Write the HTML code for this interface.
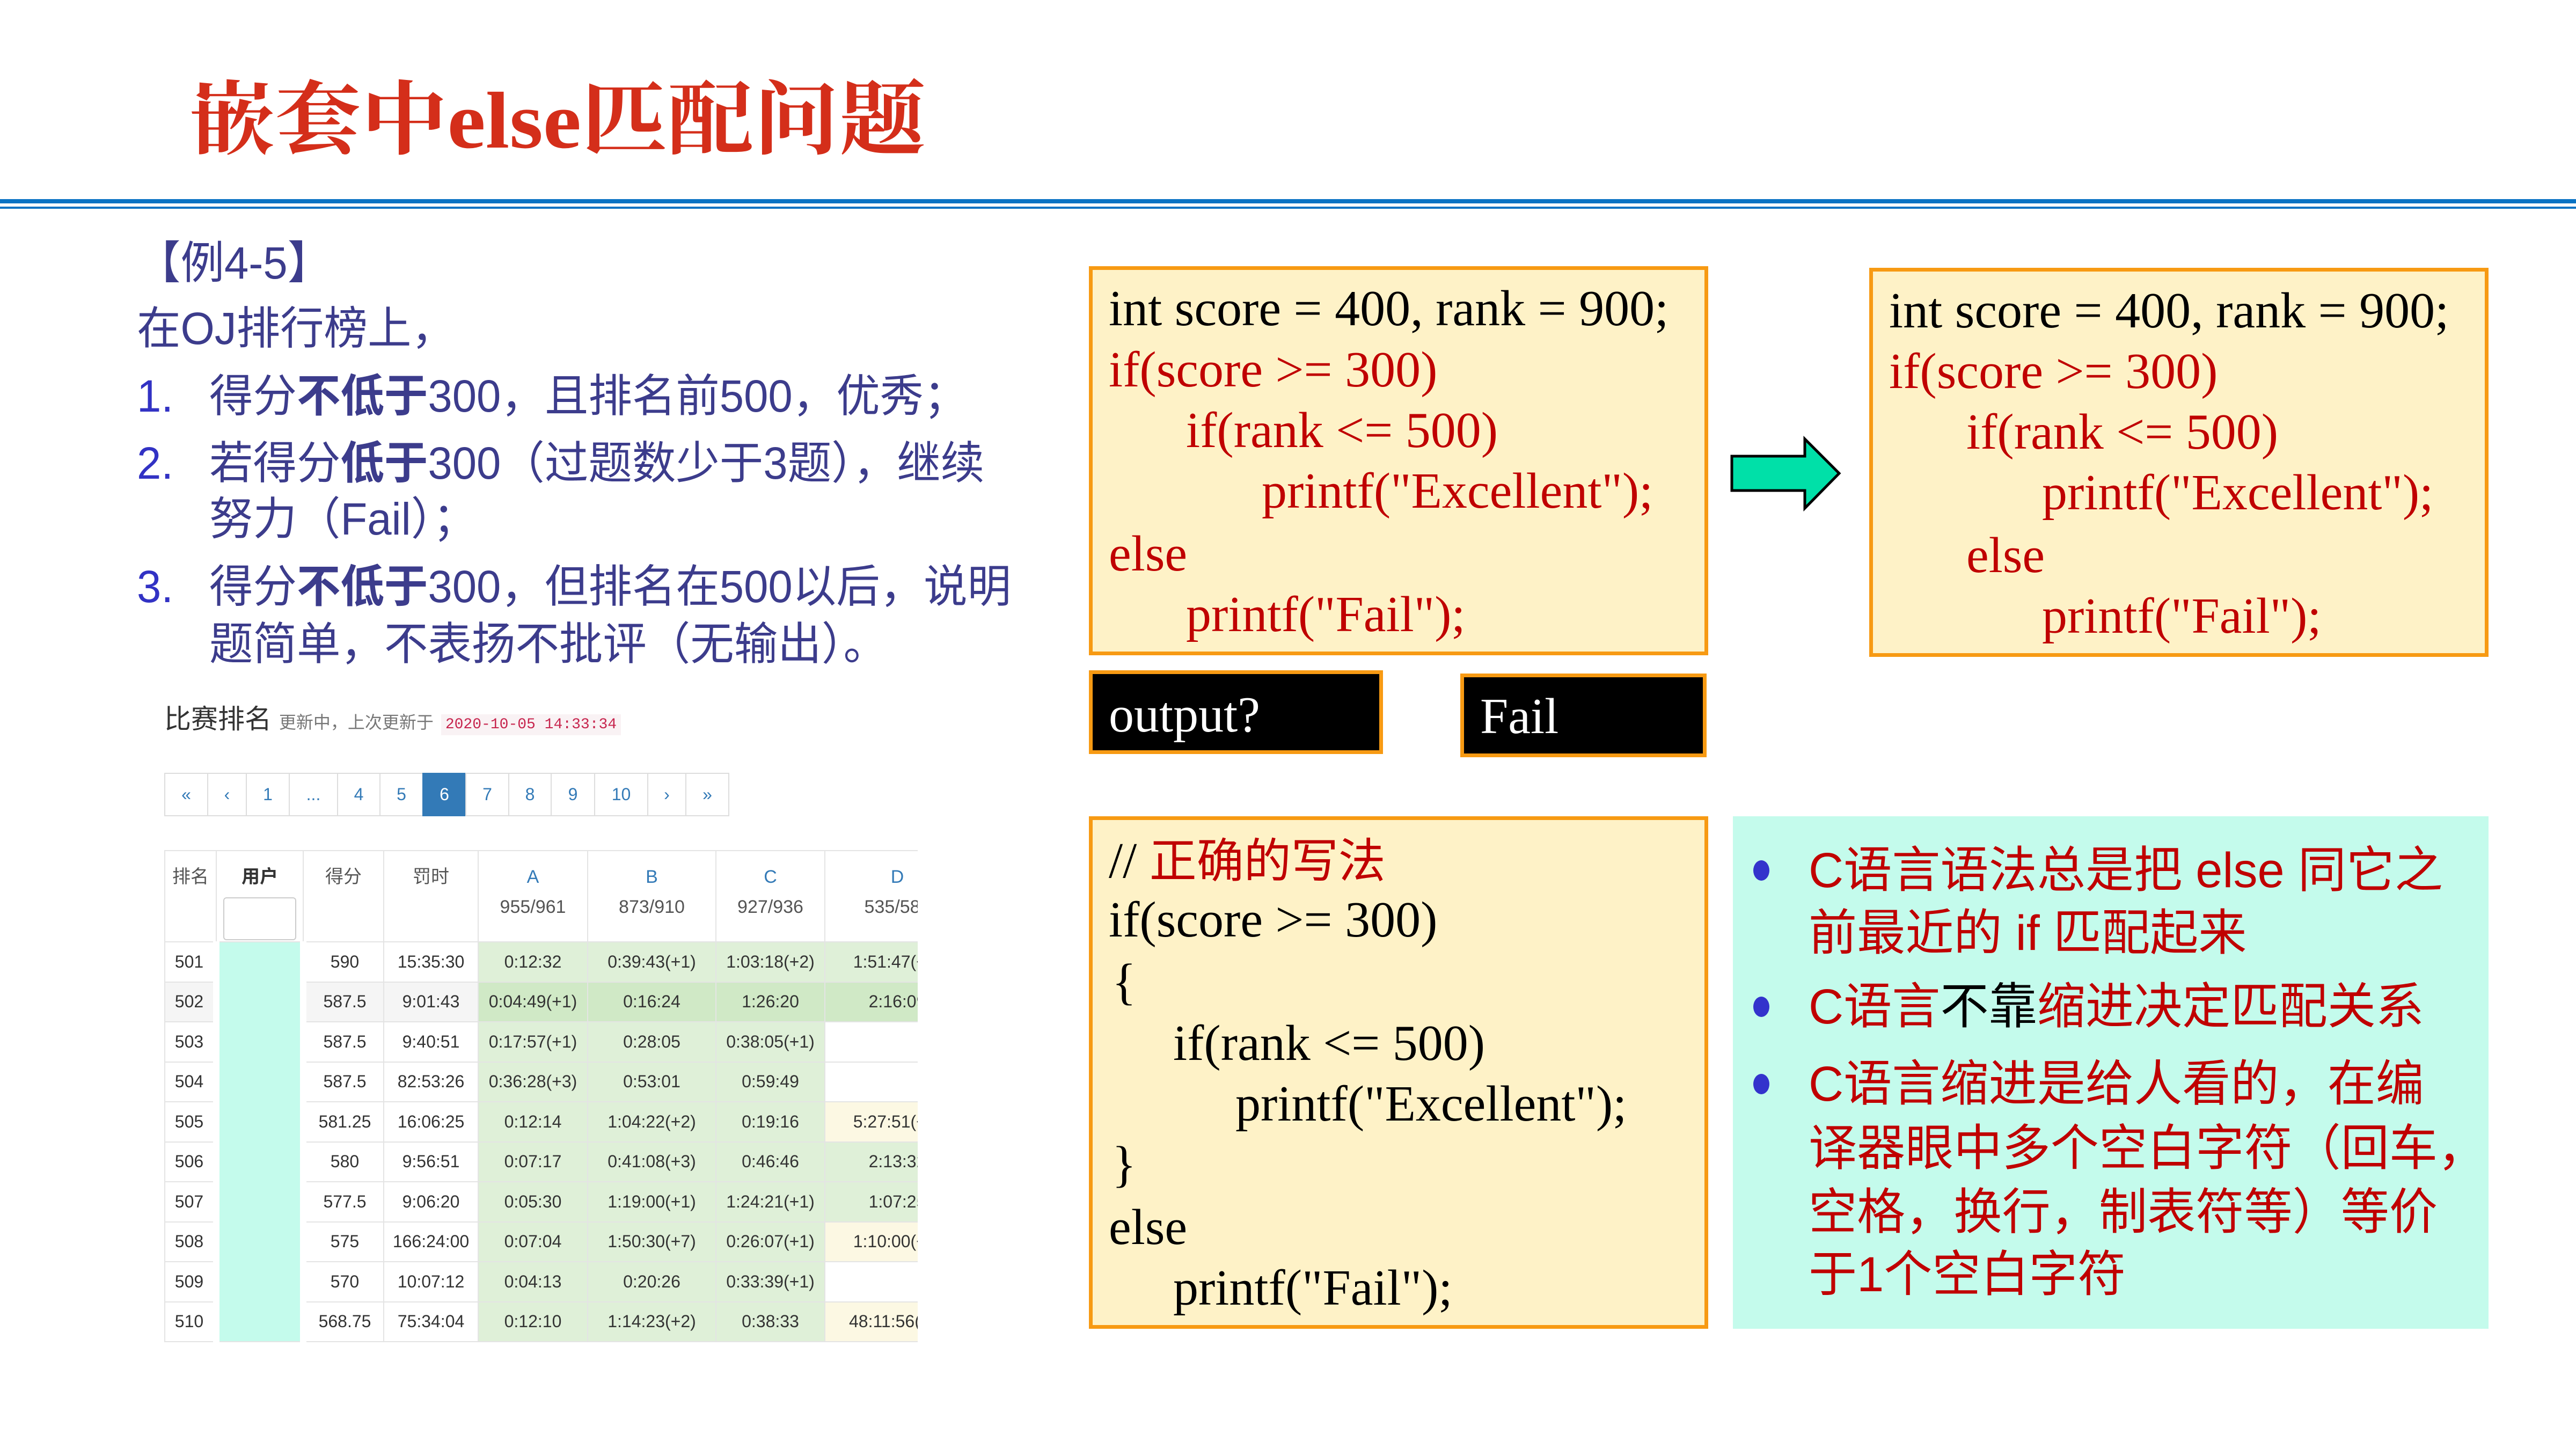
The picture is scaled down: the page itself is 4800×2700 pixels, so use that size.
<!DOCTYPE html>
<html><head><meta charset="utf-8"><style>
*{margin:0;padding:0;box-sizing:border-box}
body{width:4800px;height:2700px;background:#fff;position:relative;overflow:hidden;font-family:"Liberation Sans","Noto Sans CJK SC",sans-serif}
.a{position:absolute;white-space:nowrap}
.l{font-size:84px;color:#3c3c8c;line-height:100px;transform:scaleX(.97);transform-origin:left}
.n{color:#3232c4}
.c{font-family:"Liberation Serif","Noto Serif CJK SC",serif;font-size:94px;line-height:110px}
.r{color:#c00000}.k{color:#000}
.box{position:absolute;background:#fef2c7;border:7px solid #f79a13}
.bl{position:absolute;background:#000;border:7px solid #f79a13}
.m{font-size:92px;line-height:110px;color:#c00000;transform:scaleX(.98);transform-origin:left}
.dot{position:absolute;width:30px;height:38px;border-radius:50%;background:#3333cc}
table{border-collapse:collapse;table-layout:fixed;font-size:32px;color:#333}
td{border:2px solid #e4e4e4;text-align:center;height:74.5px;padding:0;overflow:hidden;white-space:nowrap}
.g{background:#dff0d8}.gd{background:#d0e9c6}.y{background:#fcf8e3}.gr{background:#f5f5f5}
th{border:2px solid #e4e4e4;font-weight:normal;vertical-align:top;padding-top:20px;color:#555;font-size:34px;line-height:56px}
.pg{position:absolute;top:1440px;height:81px;border:2px solid #ddd;color:#337ab7;font-size:32px;display:flex;align-items:center;justify-content:center}
</style></head><body>

<div class="a" style="left:352px;top:140px;font-family:'Liberation Serif','Noto Serif CJK SC',serif;font-weight:bold;font-size:150px;color:#d42e1a;line-height:170px;transform:scaleX(1.07);transform-origin:left">嵌套中else匹配问题</div>
<div class="a" style="left:0;top:371px;width:4800px;height:8px;background:#0a73c4"></div>
<div class="a" style="left:0;top:385px;width:4800px;height:4px;background:#0a73c4"></div>

<div class="a l" style="left:255px;top:440px">【例4-5】</div>
<div class="a l" style="left:255px;top:562px">在OJ排行榜上，</div>
<div class="a l" style="left:255px;top:688px"><span class="n">1.</span></div>
<div class="a l" style="left:390px;top:688px">得分<b>不低于</b>300，且排名前500，优秀；</div>
<div class="a l" style="left:255px;top:813px"><span class="n">2.</span></div>
<div class="a l" style="left:390px;top:813px">若得分<b>低于</b>300（过题数少于3题），继续</div>
<div class="a l" style="left:390px;top:917px">努力（Fail）；</div>
<div class="a l" style="left:255px;top:1043px"><span class="n">3.</span></div>
<div class="a l" style="left:390px;top:1043px">得分<b>不低于</b>300，但排名在500以后，说明</div>
<div class="a l" style="left:390px;top:1150px">题简单，不表扬不批评（无输出）。</div>

<!-- ranking -->
<div class="a" style="left:306px;top:1305px;font-size:50px;color:#333;line-height:70px">比赛排名 <span style="font-size:32px;color:#777">更新中，上次更新于</span> <span style="font-family:'Liberation Mono',monospace;font-size:28px;color:#c7254e;background:#f9f2f4;padding:4px 8px">2020-10-05 14:33:34</span></div>
<div class="pg" style="left:306px;width:82px">«</div>
<div class="pg" style="left:386px;width:74px">‹</div>
<div class="pg" style="left:458px;width:82px">1</div>
<div class="pg" style="left:538px;width:92px">...</div>
<div class="pg" style="left:628px;width:81px">4</div>
<div class="pg" style="left:707px;width:82px">5</div>
<div class="pg" style="left:787px;width:82px;background:#337ab7;color:#fff;border-color:#337ab7">6</div>
<div class="pg" style="left:867px;width:82px">7</div>
<div class="pg" style="left:947px;width:81px">8</div>
<div class="pg" style="left:1026px;width:83px">9</div>
<div class="pg" style="left:1107px;width:101px">10</div>
<div class="pg" style="left:1206px;width:73px">›</div>
<div class="pg" style="left:1277px;width:82px">»</div>

<div class="a" style="left:306px;top:1584px;width:1404px;height:920px;overflow:hidden">
<table style="width:1500px">
<colgroup><col style="width:96px"><col style="width:162px"><col style="width:150px"><col style="width:176px"><col style="width:204px"><col style="width:239px"><col style="width:203px"><col style="width:270px"></colgroup>
<tr style="height:170px"><th>排名</th><th style="color:#333;font-weight:bold">用户<div style="margin:10px auto 0;width:136px;height:80px;border:2px solid #ccc;border-radius:6px"></div></th><th>得分</th><th>罚时</th><th><span style="color:#337ab7">A</span><br>955/961</th><th><span style="color:#337ab7">B</span><br>873/910</th><th><span style="color:#337ab7">C</span><br>927/936</th><th><span style="color:#337ab7">D</span><br>535/582</th></tr>
<tr><td>501</td><td rowspan="10" style="background:#c4fbec;border-left:12px solid #fff;border-right:12px solid #fff"></td><td>590</td><td>15:35:30</td><td class="g">0:12:32</td><td class="g">0:39:43(+1)</td><td class="g">1:03:18(+2)</td><td class="g">1:51:47(+1)</td></tr>
<tr><td class="gr">502</td><td class="gr">587.5</td><td class="gr">9:01:43</td><td class="gd">0:04:49(+1)</td><td class="gd">0:16:24</td><td class="gd">1:26:20</td><td class="gd">2:16:09</td></tr>
<tr><td>503</td><td>587.5</td><td>9:40:51</td><td class="g">0:17:57(+1)</td><td class="g">0:28:05</td><td class="g">0:38:05(+1)</td><td></td></tr>
<tr><td>504</td><td>587.5</td><td>82:53:26</td><td class="g">0:36:28(+3)</td><td class="g">0:53:01</td><td class="g">0:59:49</td><td></td></tr>
<tr><td>505</td><td>581.25</td><td>16:06:25</td><td class="g">0:12:14</td><td class="g">1:04:22(+2)</td><td class="g">0:19:16</td><td class="y">5:27:51(+1)</td></tr>
<tr><td>506</td><td>580</td><td>9:56:51</td><td class="g">0:07:17</td><td class="g">0:41:08(+3)</td><td class="g">0:46:46</td><td class="g">2:13:32</td></tr>
<tr><td>507</td><td>577.5</td><td>9:06:20</td><td class="g">0:05:30</td><td class="g">1:19:00(+1)</td><td class="g">1:24:21(+1)</td><td class="g">1:07:25</td></tr>
<tr><td>508</td><td>575</td><td>166:24:00</td><td class="g">0:07:04</td><td class="g">1:50:30(+7)</td><td class="g">0:26:07(+1)</td><td class="y">1:10:00(+1)</td></tr>
<tr><td>509</td><td>570</td><td>10:07:12</td><td class="g">0:04:13</td><td class="g">0:20:26</td><td class="g">0:33:39(+1)</td><td></td></tr>
<tr><td>510</td><td>568.75</td><td>75:34:04</td><td class="g">0:12:10</td><td class="g">1:14:23(+2)</td><td class="g">0:38:33</td><td class="y">48:11:56(+1)</td></tr>
</table></div>

<!-- box1 -->
<div class="box" style="left:2029px;top:496px;width:1154px;height:725px"></div>
<div class="a c k" style="left:2066px;top:520px">int score = 400, rank = 900;</div>
<div class="a c r" style="left:2066px;top:634px">if(score &gt;= 300)</div>
<div class="a c r" style="left:2210px;top:747px">if(rank &lt;= 500)</div>
<div class="a c r" style="left:2351px;top:860px">printf("Excellent");</div>
<div class="a c r" style="left:2066px;top:977px">else</div>
<div class="a c r" style="left:2210px;top:1090px">printf("Fail");</div>

<div class="bl" style="left:2029px;top:1249px;width:548px;height:156px"></div>
<div class="a c" style="left:2066px;top:1277px;color:#fff">output?</div>
<div class="bl" style="left:2721px;top:1255px;width:459px;height:156px"></div>
<div class="a c" style="left:2758px;top:1280px;color:#fff">Fail</div>

<svg class="a" style="left:3220px;top:812px" width="220" height="142"><polygon points="7,38 143,38 143,6 207,70 143,135 143,102 7,102" fill="#00e0a8" stroke="#000" stroke-width="5"/></svg>

<!-- box2 -->
<div class="box" style="left:3483px;top:499px;width:1154px;height:725px"></div>
<div class="a c k" style="left:3520px;top:524px">int score = 400, rank = 900;</div>
<div class="a c r" style="left:3520px;top:637px">if(score &gt;= 300)</div>
<div class="a c r" style="left:3664px;top:750px">if(rank &lt;= 500)</div>
<div class="a c r" style="left:3805px;top:863px">printf("Excellent");</div>
<div class="a c r" style="left:3664px;top:980px">else</div>
<div class="a c r" style="left:3805px;top:1093px">printf("Fail");</div>

<!-- box3 -->
<div class="box" style="left:2029px;top:1521px;width:1154px;height:955px"></div>
<div class="a c k" style="left:2066px;top:1543px">// <span class="r" style="font-family:'Noto Sans CJK SC',sans-serif;font-size:88px">正确的写法</span></div>
<div class="a c k" style="left:2066px;top:1659px">if(score &gt;= 300)</div>
<div class="a c k" style="left:2072px;top:1775px">{</div>
<div class="a c k" style="left:2186px;top:1889px">if(rank &lt;= 500)</div>
<div class="a c k" style="left:2302px;top:2002px">printf("Excellent");</div>
<div class="a c k" style="left:2072px;top:2115px">}</div>
<div class="a c k" style="left:2066px;top:2232px">else</div>
<div class="a c k" style="left:2186px;top:2345px">printf("Fail");</div>

<!-- box4 -->
<div class="a" style="left:3229px;top:1521px;width:1408px;height:955px;background:#c4fbec"></div>
<div class="dot" style="left:3267px;top:1603px"></div>
<div class="dot" style="left:3267px;top:1857px"></div>
<div class="dot" style="left:3267px;top:2001px"></div>
<div class="a m" style="left:3370px;top:1567px">C语言语法总是把 else 同它之</div>
<div class="a m" style="left:3370px;top:1684px">前最近的 if 匹配起来</div>
<div class="a m" style="left:3370px;top:1821px">C语言<span style="color:#000">不靠</span>缩进决定匹配关系</div>
<div class="a m" style="left:3370px;top:1965px">C语言缩进是给人看的，在编</div>
<div class="a m" style="left:3370px;top:2085px">译器眼中多个空白字符（回车，</div>
<div class="a m" style="left:3370px;top:2204px">空格，换行，制表符等）等价</div>
<div class="a m" style="left:3370px;top:2320px">于1个空白字符</div>
</body></html>
